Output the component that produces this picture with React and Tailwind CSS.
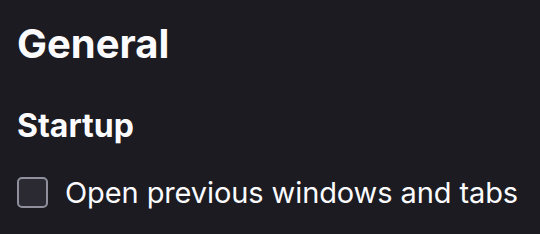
export default function App() {
    return (
        <div className="min-h-screen bg-[#1c1b22] text-[#fbfbfe] font-['Inter',sans-serif] pl-[17px] pt-[24px]">
            <h1 className="text-[40px] leading-none font-bold">General</h1>
            <h2 className="mt-[46px] text-[32px] leading-none font-bold">Startup</h2>
            <label className="mt-[35px] flex items-center gap-[17px]">
                <span className="w-[31px] h-[31px] shrink-0 rounded-[5px] border-2 border-[#8f8f9d] bg-[#2b2a33]" />
                <span className="text-[29px] leading-none tracking-[-0.1px]">Open previous windows and tabs</span>
            </label>
        </div>
    );
}
